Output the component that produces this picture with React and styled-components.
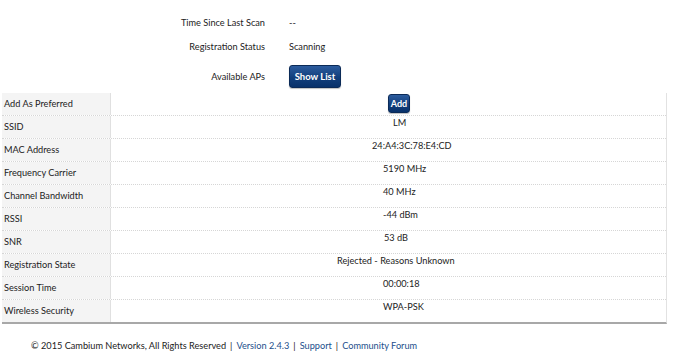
import React from "react";
import styled, { createGlobalStyle } from "styled-components";

const Global = createGlobalStyle`
  html, body { margin: 0; padding: 0; background: #fff; }
  body { font-family: Lato, "Open Sans", sans-serif; font-size: 9.2px; color: #222; }
`;

const Page = styled.div`
  width: 690px;
  height: 357px;
  overflow: hidden;
  background: #fff;
`;

const Info = styled.div`
  padding-top: 10px;
  display: flex;
  flex-direction: column;
`;

const InfoRow = styled.div`
  display: grid;
  grid-template-columns: 265px auto;
  column-gap: 24px;
  align-items: center;
  min-height: 24px;
  padding: ${(p) => (p.$button ? "6px 0 5px" : "0")};
`;

const InfoLabel = styled.div`
  text-align: right;
  color: #222;
`;

const InfoValue = styled.div`
  color: #222;
`;

const Button = styled.button`
  font-family: Lato, "Open Sans", sans-serif;
  font-weight: 700;
  font-size: ${(p) => (p.$small ? "9px" : "9.5px")};
  color: #fff;
  height: ${(p) => (p.$small ? "19px" : "23px")};
  width: ${(p) => (p.$small ? "22px" : "52px")};
  padding: 0;
  border: 1px solid #0b2a57;
  border-radius: 3px;
  background: linear-gradient(#2c5c9e, #123f7c 55%, #08316a);
  box-shadow: 0 1px 1px rgba(0, 0, 0, 0.25);
  cursor: pointer;
`;

const Table = styled.div`
  margin-left: 2px;
  width: 664px;
  border-right: 1px solid #e2e2e2;
  border-bottom: 2px solid #a8a8a8;
`;

const Row = styled.div`
  display: grid;
  grid-template-columns: 109px 1fr;
  height: 23px;
  border-bottom: 1px dotted #d6d6d6;
  box-sizing: border-box;
  &:last-child { border-bottom: none; height: 22px; }
`;

const Label = styled.div`
  background: #f4f4f4;
  border-right: 1px solid #e0e0e0;
  padding: 5px 0 0 2px;
  line-height: 12px;
  color: #222;
`;

const Value = styled.div`
  padding: 1px 0 0 ${(p) => p.$indent}px;
  line-height: 12px;
  color: #222;
`;

const Footer = styled.div`
  margin-top: 16px;
  padding-left: 31px;
  line-height: 12px;
  color: #222;
`;

const Link = styled.a`
  color: #1d4f8c;
  text-decoration: none;
`;

const Sep = styled.span`
  color: #222;
  margin: 0 4px;
`;

const rows = [
  ["SSID", "LM", 282],
  ["MAC Address", "24:A4:3C:78:E4:CD", 261],
  ["Frequency Carrier", "5190 MHz", 272],
  ["Channel Bandwidth", "40 MHz", 272],
  ["RSSI", "-44 dBm", 272],
  ["SNR", "53 dB", 273],
  ["Registration State", "Rejected - Reasons Unknown", 226],
  ["Session Time", "00:00:18", 272],
  ["Wireless Security", "WPA-PSK", 272],
];

export default function App() {
  return (
    <Page>
      <Global />
      <Info>
        <InfoRow>
          <InfoLabel>Time Since Last Scan</InfoLabel>
          <InfoValue>--</InfoValue>
        </InfoRow>
        <InfoRow>
          <InfoLabel>Registration Status</InfoLabel>
          <InfoValue>Scanning</InfoValue>
        </InfoRow>
        <InfoRow $button>
          <InfoLabel>Available APs</InfoLabel>
          <InfoValue>
            <Button>Show List</Button>
          </InfoValue>
        </InfoRow>
      </Info>
      <Table>
        <Row>
          <Label>Add As Preferred</Label>
          <Value $indent={277}>
            <Button $small>Add</Button>
          </Value>
        </Row>
        {rows.map(([l, v, i]) => (
          <Row key={l}>
            <Label>{l}</Label>
            <Value $indent={i}>{v}</Value>
          </Row>
        ))}
      </Table>
      <Footer>
        © 2015 Cambium Networks, All Rights Reserved
        <Sep>|</Sep>
        <Link href="#">Version 2.4.3</Link>
        <Sep>|</Sep>
        <Link href="#">Support</Link>
        <Sep>|</Sep>
        <Link href="#">Community Forum</Link>
      </Footer>
    </Page>
  );
}
